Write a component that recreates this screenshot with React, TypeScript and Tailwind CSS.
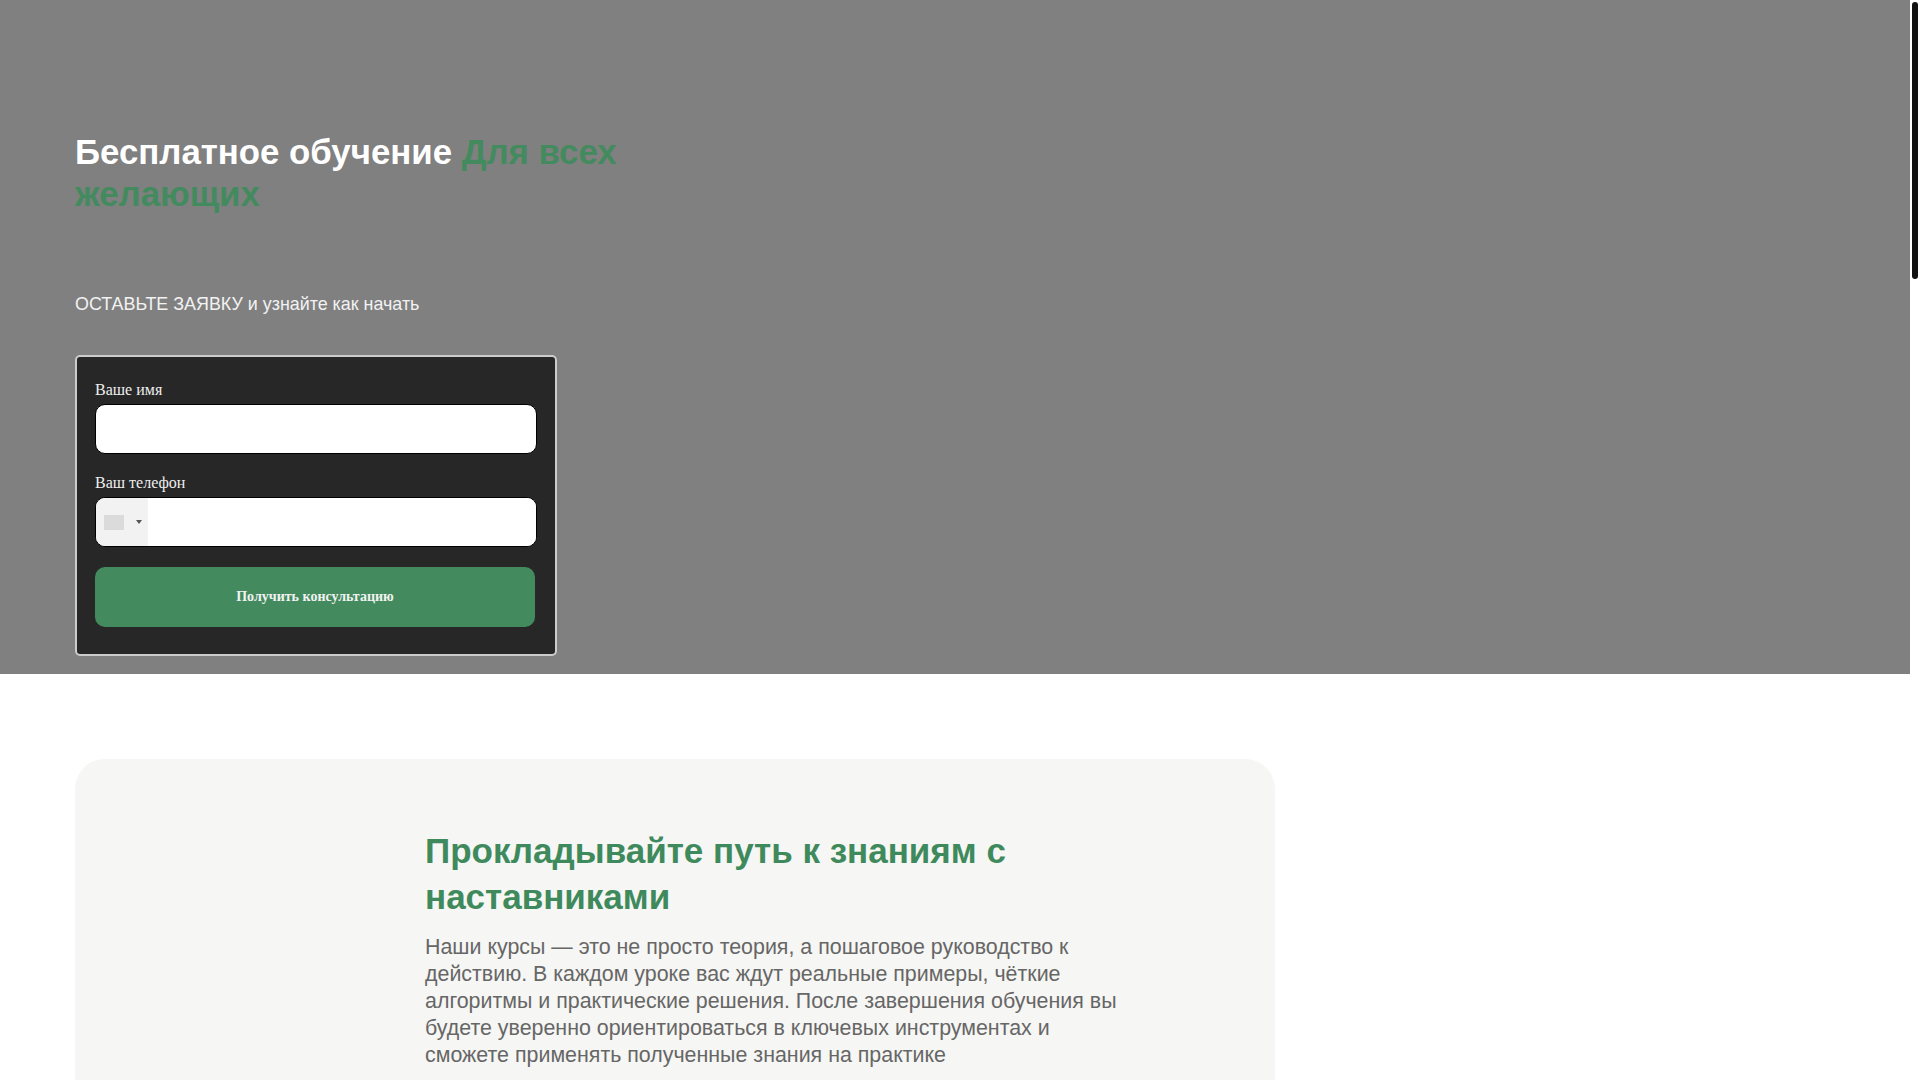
import React from 'react';

const sans = 'font-["Liberation_Sans",Arial,sans-serif]';
const serif = 'font-["Liberation_Serif","Times_New_Roman",serif]';

const LeadForm = () => (
  <form className={`w-[482px] h-[301px] rounded-[5px] border-2 border-[#cccccc] bg-[#272727] px-[18px] pt-[20px] ${serif}`}>
    <label className="block text-[16px] leading-[26px] text-[#eeeeee]">Ваше имя</label>
    <input type="text" className="mt-[1px] block w-[442px] h-[50px] rounded-[10px] border border-black bg-white" />
    <label className="mt-[16px] block text-[16px] leading-[26px] text-[#eeeeee]">Ваш телефон</label>
    <div className="mt-[1px] flex w-[442px] h-[50px] overflow-hidden rounded-[10px] border border-black bg-white">
      <div className="flex w-[52px] shrink-0 items-center bg-[#f2f2f2] pl-[8px]">
        <span className="h-[15px] w-[20px] bg-[#dbdbdb]"></span>
        <span className="ml-[12px] h-0 w-0 border-x-[3px] border-t-[4px] border-x-transparent border-t-[#555555]"></span>
      </div>
      <input type="tel" className="min-w-0 flex-1 bg-white" />
    </div>
    <button type="button" className="mt-[20px] block w-[440px] h-[60px] rounded-[10px] bg-[#438b5e] pb-[2px] text-center text-[14px] font-bold text-[#f2f2f2]">
      Получить консультацию
    </button>
  </form>
);

export default function App() {
  return (
    <div className={`relative h-screen overflow-hidden bg-white ${sans}`}>
      {/* Hero */}
      <section className="h-[674px] bg-[#808080] px-[75px] pt-[131px]">
        <h1 className="w-[600px] text-[34.8px] font-bold leading-[42px] text-white">
          Бесплатное обучение <span className="text-[#438b5e]">Для всех желающих</span>
        </h1>
        <p className="mt-[75px] text-[17.9px] leading-[28px] text-[#f2f2f2]">ОСТАВЬТЕ ЗАЯВКУ и узнайте как начать</p>
        <div className="mt-[37px]">
          <LeadForm />
        </div>
      </section>

      {/* Mentors */}
      <section className="px-[75px] pt-[85px]">
        <div className="flex h-[3200px] w-[1200px] rounded-[30px] bg-[#f6f6f4] pl-[350px] pt-[69px]">
          <div className="w-[700px]">
            <h2 className="text-[35px] font-bold leading-[46px] text-[#3f8a5d]">Прокладывайте путь к знаниям с наставниками</h2>
            <p className="mt-[14px] text-[21.4px] leading-[27px] text-[#666666]">
              Наши курсы — это не просто теория, а пошаговое руководство к действию. В каждом уроке вас ждут реальные примеры, чёткие алгоритмы и практические решения. После завершения обучения вы будете уверенно ориентироваться в ключевых инструментах и сможете применять полученные знания на практике
            </p>
          </div>
        </div>
      </section>

      {/* Scrollbar */}
      <div className="absolute right-0 top-0 h-full w-[10px] bg-white">
        <div className="ml-[2px] mt-[2px] h-[277px] w-[6px] rounded-[3px] bg-[#111111]"></div>
      </div>
    </div>
  );
}
